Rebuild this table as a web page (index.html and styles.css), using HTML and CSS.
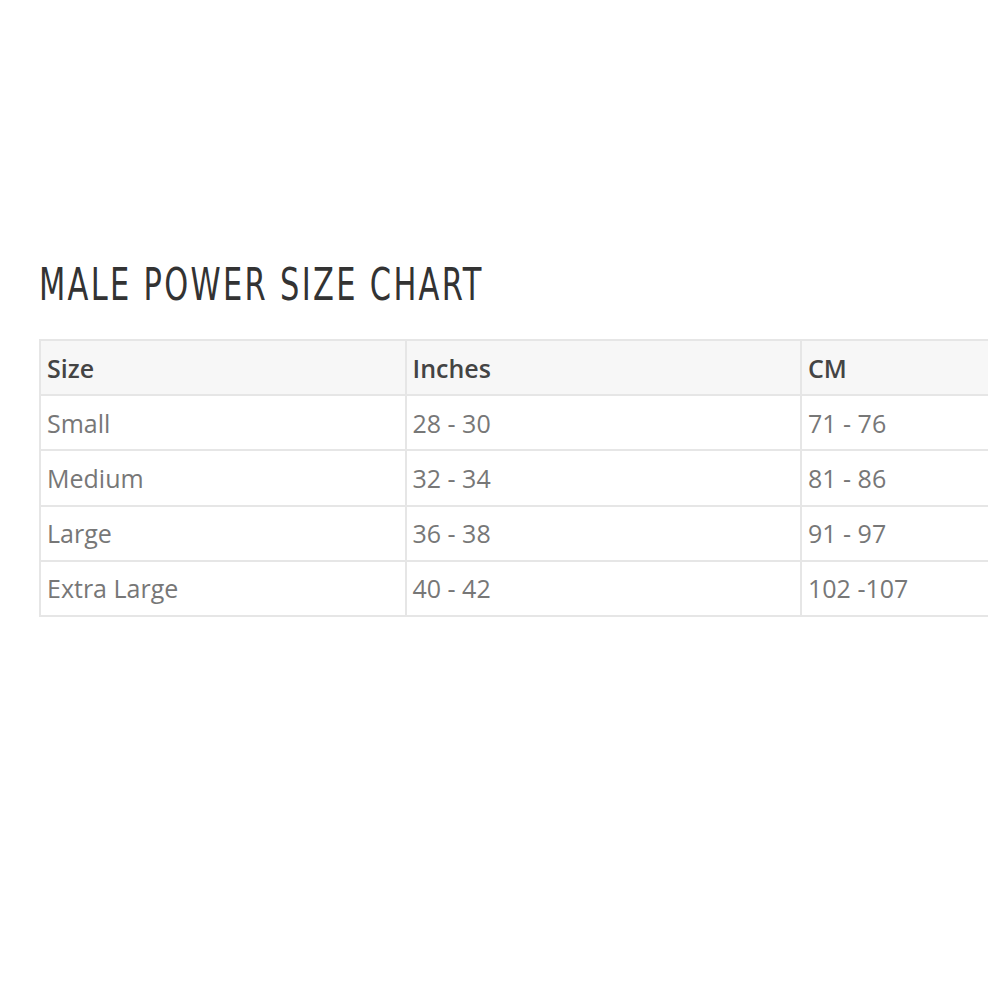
FILE: index.html
```html
<!DOCTYPE html>
<html>
<head>
<meta charset="utf-8">
<link rel="stylesheet" href="styles.css">
</head>
<body>
<div class="page">
  <h1 class="title">MALE POWER SIZE CHART</h1>
  <table class="chart">
    <thead>
      <tr><th class="c1">Size</th><th class="c2">Inches</th><th class="c3">CM</th></tr>
    </thead>
    <tbody>
      <tr><td>Small</td><td>28 - 30</td><td>71 - 76</td></tr>
      <tr><td>Medium</td><td>32 - 34</td><td>81 - 86</td></tr>
      <tr><td>Large</td><td>36 - 38</td><td>91 - 97</td></tr>
      <tr><td>Extra Large</td><td>40 - 42</td><td>102 -107</td></tr>
    </tbody>
  </table>
</div>
</body>
</html>
```
FILE: styles.css
```css
html, body {
  margin: 0;
  padding: 0;
  background: #fff;
}
.page {
  padding: 259px 0 0 39px;
  width: 949px;
}
.title {
  margin: 0 0 28px 0;
  font-family: "DejaVu Sans Condensed", "DejaVu Sans", sans-serif;
  font-weight: normal;
  font-size: 44px;
  line-height: 52px;
  letter-spacing: 3px;
  color: #333;
  transform: scaleX(0.77);
  transform-origin: left center;
  white-space: nowrap;
}
.chart {
  border-collapse: collapse;
  width: 949px;
  font-family: "Open Sans", sans-serif;
  font-size: 25px;
  table-layout: fixed;
}
.chart th, .chart td {
  border: 2px solid #e6e6e6;
  height: 53.2px;
  padding: 0 0 0 6px;
  text-align: left;
  vertical-align: middle;
}
.chart tr > *:last-child {
  border-right: none;
}
.chart th {
  background: #f7f7f7;
  color: #444;
  font-weight: 600;
}
.chart td {
  color: #777;
}
.c1 { width: 357.5px; }
.c2 { width: 387.5px; }
.c3 { width: auto; }
```
